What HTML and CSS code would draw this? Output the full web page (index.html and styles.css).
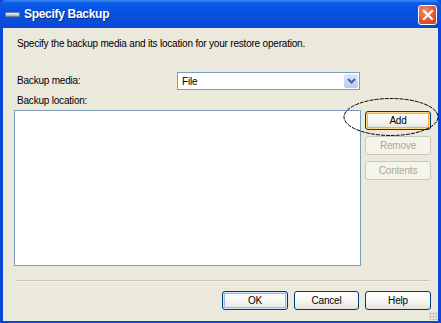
FILE: index.html
```html
<!DOCTYPE html>
<html lang="en">
<head>
    <meta charset="UTF-8">
    <title>Specify Backup</title>
    <link rel="stylesheet" href="styles.css">
</head>
<body>
    <div class="window">
        <div class="titlebar">
            <span class="app-icon"></span>
            <span class="title">Specify Backup</span>
            <span class="close-btn">
                <svg width="12" height="12" viewBox="0 0 12 12">
                    <path d="M2 2 L10 10 M10 2 L2 10" stroke="#fff" stroke-width="2.2" stroke-linecap="square"></path>
                </svg>
            </span>
        </div>
        <div class="client">
            <p class="intro">Specify the backup media and its location for your restore operation.</p>

            <div class="media-row">
                <span class="label">Backup media:</span>
                <div class="combo">
                    <span class="combo-text">File</span>
                    <span class="combo-btn">
                        <svg width="9" height="6" viewBox="0 0 9 6">
                            <path d="M1 1 L4.5 4.5 L8 1" stroke="#4d6185" stroke-width="2" fill="none"></path>
                        </svg>
                    </span>
                </div>
            </div>

            <div class="label location-label">Backup location:</div>

            <div class="location-row">
                <div class="listbox"></div>
                <div class="side-buttons">
                    <button class="btn btn-hot">Add</button>
                    <button class="btn" disabled>Remove</button>
                    <button class="btn" disabled>Contents</button>
                </div>
            </div>

            <div class="separator"></div>

            <div class="footer">
                <button class="btn btn-default">OK</button>
                <button class="btn btn-cancel">Cancel</button>
                <button class="btn">Help</button>
            </div>

            <span class="grip"></span>
        </div>

        <!-- annotation circle drawn over the Add button -->
        <svg class="callout" width="98" height="42" viewBox="0 0 98 42">
            <ellipse cx="49" cy="20" rx="47" ry="18.5" fill="none" stroke="#000" stroke-width="1" stroke-dasharray="4 1"></ellipse>
        </svg>
    </div>
</body>
</html>
```

FILE: styles.css
```css
* { box-sizing: border-box; }

html, body {
    margin: 0;
    padding: 0;
}

body {
    width: 441px;
    height: 323px;
    overflow: hidden;
    font-family: 'Liberation Sans', Arial, sans-serif;
    font-size: 10px;
    letter-spacing: -0.2px;
    color: #000;
}

.window {
    position: relative;
    width: 441px;
    height: 323px;
    display: flex;
    flex-direction: column;
    background: #0a46d8;
    padding: 0 3px 2px 3px;
}

/* Title bar */
.titlebar {
    height: 28px;
    margin: 0 -3px;
    padding: 0 4px 0 5px;
    display: flex;
    align-items: center;
    background: linear-gradient(#3d8cf6 0px, #0a5ce8 3px, #0654e4 10px, #0a4edc 20px, #0a48d4 28px);
    border-radius: 6px 6px 0 0;
}

.app-icon {
    width: 15px;
    height: 5px;
    margin-top: 1px;
    background: linear-gradient(#f4f4f4, #9fb0cc);
    border: 1px solid #6d7c98;
}

.title {
    margin-left: 4px;
    color: #fff;
    font-weight: bold;
    font-size: 12px;
    letter-spacing: -0.3px;
    text-shadow: 1px 1px 0 #0a2a88;
    flex: 1;
}

.close-btn {
    width: 19px;
    height: 20px;
    margin-top: 2px;
    border: 1px solid #fff;
    border-radius: 3px;
    background: radial-gradient(circle at 35% 30%, #f09070, #e0582c 55%, #c8401c);
    display: flex;
    align-items: center;
    justify-content: center;
}

/* Dialog body */
.client {
    position: relative;
    flex: 1;
    background-color: #ebe8dc;
    padding: 10px 7px 0 11px;
    display: flex;
    flex-direction: column;
}

.intro {
    margin: 0 0 0 3px;
    line-height: 12px;
}

.label {
    line-height: 12px;
    margin-left: 3px;
}

.media-row {
    display: flex;
    align-items: center;
    margin-top: 22px;
    height: 18px;
}

.media-row .label {
    width: 160px;
}

.combo {
    width: 183px;
    height: 18px;
    border: 1px solid #7f9db9;
    background: #fff;
    display: flex;
    align-items: center;
    padding: 1px;
}

.combo-text {
    flex: 1;
    padding-left: 3px;
}

.combo-btn {
    width: 14px;
    height: 14px;
    background: linear-gradient(#dce7fd, #b6cbf8);
    border-radius: 2px;
    display: flex;
    align-items: center;
    justify-content: center;
}

.location-label {
    margin-top: 5px;
}

.location-row {
    display: flex;
    margin-top: 3px;
    gap: 4px;
}

.listbox {
    width: 347px;
    height: 156px;
    background: #fff;
    border: 1px solid #7f9db9;
}

.side-buttons {
    display: flex;
    flex-direction: column;
    gap: 6px;
    padding-top: 1px;
}

/* XP style push buttons */
.btn {
    width: 66px;
    height: 19px;
    padding: 0;
    font-family: inherit;
    font-size: 10px;
    letter-spacing: -0.2px;
    color: #000;
    border: 1px solid #003c74;
    border-radius: 3px;
    background: linear-gradient(#ffffff, #f4f4f0 60%, #e3e2da);
}

.btn-hot {
    box-shadow: inset 0 0 0 1px #fdd889, inset 0 0 0 2px #f8b330;
}

.btn-default {
    box-shadow: inset 0 0 0 1px #cee7ff, inset 0 0 0 2px #9ab8ec;
}

.btn-cancel {
    width: 65px;
}

.btn:disabled {
    color: #aca899;
    border-color: #c9c7ba;
    background: #f5f4ea;
}

.separator {
    margin: 14px 0 0 2px;
    width: 414px;
    height: 2px;
    border-top: 1px solid #c7c6b9;
    border-bottom: 1px solid #f4f3ee;
}

.footer {
    display: flex;
    justify-content: flex-end;
    gap: 6px;
    margin-top: 9px;
}

.grip {
    position: absolute;
    right: 1px;
    bottom: 1px;
    width: 8px;
    height: 8px;
    background: radial-gradient(circle, #b8b4a4 0.8px, transparent 1.2px) 0 0 / 3px 3px;
}

.callout {
    position: absolute;
    left: 342px;
    top: 97px;
}
```
